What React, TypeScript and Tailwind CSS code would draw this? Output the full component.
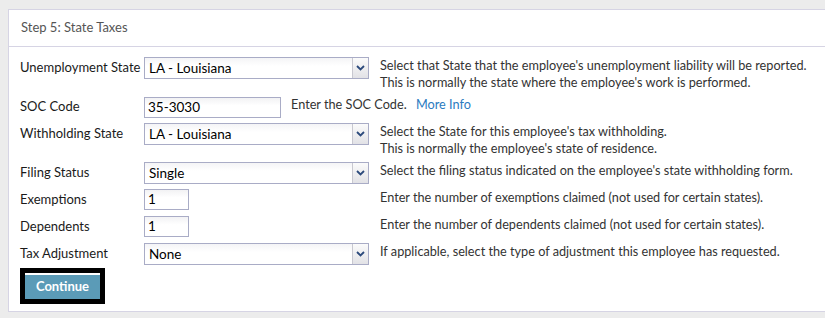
import React from 'react';

const font = { fontFamily: 'Lato, "Open Sans", sans-serif' };

const Chevron: React.FC = () => (
  <svg width="9" height="6" viewBox="0 0 9 6">
    <path d="M1 1 L4.5 4.5 L8 1" fill="none" stroke="#2c4a7c" strokeWidth="1.8" />
  </svg>
);

const Select: React.FC<{ value: string }> = ({ value }) => (
  <div className="flex h-[22px] w-[225px] items-stretch border border-[#a9acc6] bg-gradient-to-b from-[#f4f4f6] to-white to-40%">
    <span className="flex-1 pl-[4px] text-[13.5px] leading-[20px] text-black">{value}</span>
    <span className="flex w-[16px] items-center justify-center border-l border-[#c8c8d0] bg-gradient-to-b from-[#fbfbfb] to-[#e2e2e6]">
      <Chevron />
    </span>
  </div>
);

const TextInput: React.FC<{ value: string; w: string }> = ({ value, w }) => (
  <div className={`h-[21px] ${w} border border-[#a9acc6] bg-gradient-to-b from-[#f2f2f4] to-white to-40% pl-[3px] text-[13.5px] leading-[19px] text-black`}>
    {value}
  </div>
);

const Row: React.FC<{ label: string; children: React.ReactNode; desc: React.ReactNode; pb?: string }> = ({
  label,
  children,
  desc,
  pb = 'pb-[5px]',
}) => (
  <div className={`flex items-start ${pb}`}>
    <div className="flex h-[22px] w-[124px] items-center text-[13px] text-[#1a1a1a]">{label}</div>
    {children}
    <div className="text-[12.7px] leading-[17px] text-[#333]">{desc}</div>
  </div>
);

export default function App() {
  return (
    <div className="h-[318px] w-[825px] overflow-hidden bg-[#ececec] pt-[9px] pl-[8px]" style={font}>
      <div className="w-[840px] border-t border-b border-l border-[#d6d4e4] bg-white">
        <div className="flex h-[37px] items-center border-b border-[#d6d4e4] pl-[12px] text-[13px] text-[#555]">
          Step 5: State Taxes
        </div>

        <div className="pl-[11px] pt-[10px] pb-[7px]">
          <Row
            label="Unemployment State"
            desc={
              <>
                Select that State that the employee's unemployment liability will be reported.
                <br />
                This is normally the state where the employee's work is performed.
              </>
            }
          >
            <div className="mr-[11px]">
              <Select value="LA - Louisiana" />
            </div>
          </Row>

          <Row
            label="SOC Code"
            desc={
              <>
                Enter the SOC Code. <span className="ml-[6px] text-[#2b7bbf]">More Info</span>
              </>
            }
          >
            <div className="mr-[10px] pt-[1px]">
              <TextInput value="35-3030" w="w-[137px]" />
            </div>
          </Row>

          <Row
            label="Withholding State"
            desc={
              <>
                Select the State for this employee's tax withholding.
                <br />
                This is normally the employee's state of residence.
              </>
            }
          >
            <div className="mr-[11px]">
              <Select value="LA - Louisiana" />
            </div>
          </Row>

          <Row label="Filing Status" desc="Select the filing status indicated on the employee's state withholding form.">
            <div className="mr-[11px]">
              <Select value="Single" />
            </div>
          </Row>

          <Row label="Exemptions" desc="Enter the number of exemptions claimed (not used for certain states).">
            <div className="mr-[191px]">
              <TextInput value="1" w="w-[45px]" />
            </div>
          </Row>

          <Row label="Dependents" desc="Enter the number of dependents claimed (not used for certain states).">
            <div className="mr-[191px]">
              <TextInput value="1" w="w-[45px]" />
            </div>
          </Row>

          <Row label="Tax Adjustment" pb="pb-[3px]" desc="If applicable, select the type of adjustment this employee has requested.">
            <div className="mr-[11px]">
              <Select value="None" />
            </div>
          </Row>

          <div className="inline-block border-[5px] border-black">
            <button className="h-[24px] w-[75px] bg-[#5b9bb7] text-[13px] font-bold text-white" style={font}>
              Continue
            </button>
          </div>
        </div>
      </div>
    </div>
  );
}
